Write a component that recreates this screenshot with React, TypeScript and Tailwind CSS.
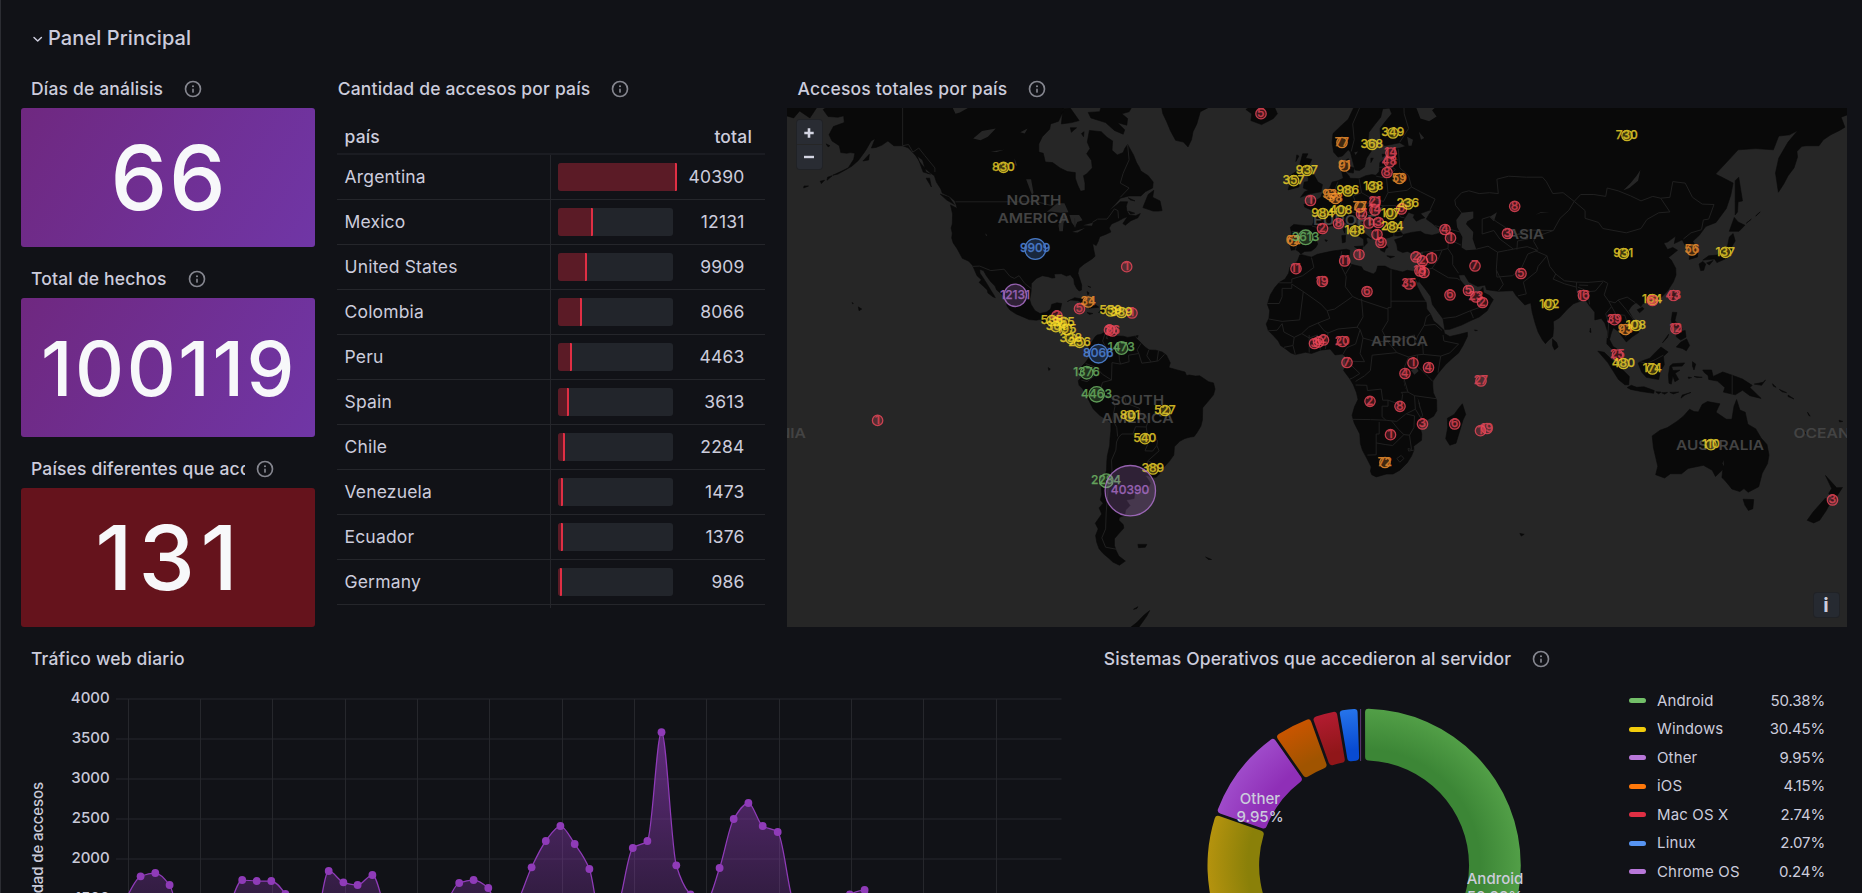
import React from "react";

/* ---------- map geometry: "lon,lat" rings in web mercator ---------- */

const project = (lon: number, lat: number): [number, number] => [
  1317.4 + 2.942 * lon,
  367.6 - 168.5 * Math.log(Math.tan(Math.PI / 4 + (lat * Math.PI) / 360)),
];

const toPath = (ring: string, close: boolean) =>
  "M" +
  ring
    .trim()
    .split(/\s+/)
    .map((p) => {
      const [lon, lat] = p.split(",").map(Number);
      const [x, y] = project(lon, lat);
      return x.toFixed(1) + " " + y.toFixed(1);
    })
    .join("L") +
  (close ? "Z" : "");

const LAND: string[] = [
  // Americas
  "-166,75 -166,68.3 -163.8,66.6 -168,65.6 -166.3,64.6 -163,64.5 -161,64.7 -160.8,63.7 -164.5,63.1 -166,61.8 -165,60.8 -162.5,60 -162,58.8 -160,58.7 -158.7,58.8 -157.2,58.7 -157.6,57.6 -159.5,56 -162,55.3 -164.7,54.6 -163,54.8 -160.5,55.6 -158.3,56.3 -156,57.4 -154.2,58.7 -153.3,59.4 -151.7,60.8 -150.3,61.2 -151.6,59.6 -150,59.7 -148,60.1 -146,60.8 -144,60 -141,60 -139,59.6 -136.6,58.3 -135,57 -133.5,56 -131.5,55 -130.2,54.5 -129.5,53.2 -128,51.8 -127.5,50.9 -125,50.2 -123.2,49.2 -122.4,47.5 -124.7,48.3 -124,46.2 -124.1,43.8 -124.5,42.8 -124.1,41.5 -124.3,40.3 -123.8,39 -122.5,37.5 -121.9,36.6 -120.7,34.8 -118.5,34 -117.2,32.8 -116.3,31 -115.7,29.8 -114.2,28.6 -115,27.8 -113.6,26.7 -112.2,25.5 -112,24.6 -110.3,23.4 -109.5,23.1 -110,24 -111,25.4 -112.2,27.2 -113.5,29 -114.7,30.5 -114.8,31.7 -113.5,31.3 -112.5,29.8 -111,28 -109.6,26.7 -109,25.5 -107,24 -105.8,22.4 -105.5,20.5 -104.5,19.2 -102.5,18 -100,17 -98,16.1 -95.5,15.9 -94,16.2 -92.3,14.6 -90,13.8 -87.8,13.2 -87.3,12.8 -85.8,11.1 -85.7,10 -84,9.4 -83.2,8.4 -81.5,8 -80.3,7.3 -80,8.4 -79,8.9 -78.3,8.2 -77.8,7.3 -77.4,5.6 -77.2,4 -78.8,1.8 -80,0.5 -80.9,-1 -80.8,-2.2 -80,-2.8 -80.3,-3.4 -81.3,-4.5 -81,-6 -79.8,-7.2 -78.5,-9.5 -77.2,-12 -76.2,-13.9 -74,-16 -71.5,-17.5 -70.2,-18.5 -70.2,-21 -70.5,-23.5 -70.6,-25.5 -71.4,-28.8 -71.6,-30.5 -71.7,-33 -72.6,-35.5 -73.5,-37.2 -73.3,-39.5 -73.8,-41 -72.8,-41.8 -74.2,-43 -73.3,-44.5 -74.6,-45.8 -75.5,-46.7 -74.5,-48 -75.4,-49.5 -75,-51 -74.2,-52.3 -72.8,-53.3 -71,-54.2 -69.5,-55 -67.3,-55.6 -65.3,-54.8 -67.5,-53.8 -68.5,-52.6 -69,-51.6 -69,-50.2 -67.7,-49.2 -65.8,-47.8 -66,-47 -67.5,-46 -67.3,-45.3 -65.5,-44.8 -65.2,-43.5 -63.7,-42.4 -65,-41 -62.3,-40.6 -62.1,-39 -60.5,-38.9 -57.7,-38.2 -56.8,-36.6 -57.3,-35.8 -58.5,-34.4 -57.8,-34.4 -56.2,-34.9 -54.8,-34.9 -53.5,-33.8 -52.1,-32 -50.2,-30.2 -48.8,-28.5 -48.6,-26 -46.8,-24.3 -45,-23.4 -43.2,-23 -41.9,-22.8 -40.9,-21.5 -39.6,-19.5 -39.1,-17.5 -39,-13.5 -37.5,-11.8 -35.3,-9.2 -34.8,-7.3 -35.3,-5.2 -37,-4.8 -38.6,-3.7 -40,-2.8 -41.5,-2.9 -43.5,-2.5 -44.5,-2.7 -45,-1.5 -48,-0.7 -50.5,0 -50,1.6 -51.3,4.2 -52.8,5.3 -55,5.9 -57.2,6 -58.6,7 -60,8.4 -61.5,9.8 -62,10.6 -64.5,10.2 -66,10.6 -68,10.7 -69.8,11.5 -70.2,12 -71.5,11 -71,9.3 -72,9.8 -71.7,11 -72.2,12 -73.5,11.3 -74.8,11 -75.5,10.5 -76.8,8.5 -77.5,8.6 -79,9.5 -80.5,9.1 -82,9 -83.5,10.7 -83.6,12.5 -83.2,14.8 -84.5,15.8 -86.5,15.8 -88.6,15.8 -88.2,17.5 -87.5,19 -86.9,21.3 -88.5,21.5 -90.3,21 -90.7,19.5 -92,18.6 -94.3,18.1 -96,19 -97.3,21 -97.8,22.5 -97.3,25 -97.2,27.5 -95.5,29 -93.5,29.8 -91.5,29.5 -90.2,29.1 -89.2,29.2 -89.5,30.3 -87,30.4 -85.3,29.7 -84,30.1 -82.8,28.8 -82.6,27.3 -81.8,26 -81,25.2 -80.2,25.5 -80.1,27 -80.7,28.6 -81.4,30.5 -81,32 -79.3,33.2 -77.8,34 -76.5,34.7 -75.6,35.4 -76,37 -76.4,38.8 -75.2,38.3 -74.5,39.4 -74,40.6 -72,41.2 -70.2,41.8 -70.8,42.8 -70,43.8 -67.5,44.6 -66,45.2 -64.5,45.6 -66.1,43.9 -65.3,43.5 -63.4,44.6 -61,45.3 -60.2,46.3 -61.8,45.8 -64,46 -64.8,47 -65,48 -64.5,49 -67,49 -69.5,47.6 -71,46.9 -69,48.3 -67,49.8 -64,50.3 -60,50.3 -58.5,51.2 -56,52 -55.8,53.2 -57.5,54.5 -60,55.4 -60.5,56.1 -61.5,57 -62.5,58.4 -64.5,60.2 -65.5,59.5 -66,58.8 -68,58.4 -69.8,59.2 -69.6,60.8 -71.5,61.4 -73.5,62.3 -77.5,62.5 -78.2,60.6 -77.3,59.5 -78.4,58.6 -76.8,57.4 -76.5,56 -78.5,54.8 -79.5,54.5 -79,53 -79,51.5 -80.5,51.3 -81.5,52.6 -82.3,54 -82.3,55.1 -85,55.3 -87.5,56 -90,57 -92.5,57.1 -93.2,58.7 -94.7,58.9 -94.7,60.3 -93.5,61.5 -91,62.7 -90.7,63.5 -88,63.9 -86.8,65 -86,66 -85,68 -85,75",
  "-73,75 -73,68 -73.5,66 -74,65.3 -77.9,65.2 -77,64.4 -72,63.7 -69,62.5 -66,61.9 -65.5,62.6 -68,63.7 -64.8,63.3 -64.5,64.3 -66.5,65 -64,65.3 -62,66.7 -62,75",
  "-86.5,65.7 -84,65.8 -81,64 -83.5,63.7 -87,63.5",
  "-84,62.9 -81.9,62.9 -83.6,62.2", "-80.2,62 -79.3,62.3 -79.5,61.5",
  "-59.3,47.7 -57.5,50.6 -55.6,51.5 -56,50 -53.5,49.2 -52.8,47 -54,46.9 -55.8,46.9",
  "-64.3,49.9 -62,49.2 -63.5,49.4", "-64.2,46.9 -62.1,46.4 -63.5,46.2",
  "-128.2,50.7 -125.2,50 -123.4,48.4 -126,49.4", "-133,54 -131.8,54 -131.2,52.2",
  "-136,58.2 -134.2,57.5 -133,55.2 -131.5,54.8 -134,55.2",
  "-154.5,57.3 -152.3,58.5 -152.5,57.5", "-171.5,63.7 -169,63.3 -171,63.3", "-167,60.3 -165.7,60 -166.3,59.8",
  "-166.5,54.2 -164.9,54.5 -166.7,53.6", "-169,53.4 -167.5,53.6 -168.6,52.9", "-174.5,52.4 -173,52.4 -174.6,52",
  "-54,75 -53.5,67 -52.5,65 -51.2,63.8 -50,62.5 -48.2,60.9 -45.5,60.6 -44,59.8 -42.8,61 -42.3,62.3 -41,63.5 -39.8,65.3 -36.5,66 -32,68 -30,75",
  "-24.3,65.6 -22.3,65 -22.6,64 -19,63.4 -15,64.3 -13.6,65 -15,66.3 -17,66.1 -20,65.8 -22,66.3",
  "-85,21.9 -82.5,23.1 -79.5,22.6 -75,20.6 -74.3,20.1 -77.6,19.8 -78.2,20.9 -81.5,22.2 -84,22.4",
  "-74.4,18.4 -73,19.9 -70,19.7 -68.4,18.6 -71,18.1", "-78.3,18.4 -76.3,18.1 -77.5,17.8", "-67.2,18.4 -65.7,18.3 -66.5,17.9",
  "-78.3,25 -77.6,24.6 -78,24", "-61.8,10.7 -60.9,10.8 -61.2,10.1", "-78,26.7 -77,26.3 -77.7,26.5",
  "-61,-51.4 -58,-51.4 -58.5,-52 -60.8,-52.1", "-38,-54 -36,-54.5 -37,-54.5",
  "-156,20.2 -154.9,19.5 -155.8,19", "-158.2,21.6 -157.7,21.3 -158,21.2", "-91.5,0 -90.8,-0.5 -91.3,-1",
  "-64,-68 -64,-66 -61.5,-65.2 -59,-64.1 -57,-63.4 -58,-64.2 -61,-66 -61.5,-68", "-62.5,-63.2 -61,-62.8 -61.5,-63.1",
  // Chukotka beyond the antimeridian
  "-182,75 -182,64.9 -178,64.4 -176,65.4 -172.5,64.4 -170,66 -175,67.2 -178,75",
  // Eurasia and Africa
  "15,75 14.5,67.5 12.5,66 10.5,64.2 8,63.2 5.3,62 5,60.5 5.5,58.9 7,58 8.5,58.2 10.5,59.3 11.2,58.9 12,57.3 12.8,55.6 14.3,55.5 16,56.2 16.7,57.8 18.5,59.2 18.8,60 17.2,60.8 17.5,62.2 19.5,63.4 21.5,64.5 22.2,65.7 24.5,65.8 25.3,65 22.8,63.7 21.3,62.8 21.5,61 22.8,60 25,60.2 28,60.5 30,59.9 28,59.6 24,59.3 23.5,58.6 24.4,58.2 24.2,57.2 22.6,57.6 21.2,57 21,55.3 19.9,54.6 18.5,54.7 16.5,54.5 14.2,53.9 11,54 10.8,54.4 9.6,55.2 10.5,56.6 10.5,57.7 8.2,57 8.2,55.5 8.8,54 7,53.5 5,53.2 4,51.8 2.5,51.1 1.6,50.8 1.2,50 -0.2,49.4 -1.5,49.6 -1.5,48.6 -4.6,48.5 -4.3,47.8 -2.2,47.2 -1.2,46 -1.3,44.3 -1.8,43.4 -4,43.4 -8,43.7 -9.2,43 -8.8,41.5 -9.4,38.7 -8.9,37 -7.4,37.2 -6.3,36.6 -5.6,36 -4.4,36.7 -2.1,36.8 -0.6,37.7 0.1,38.7 -0.3,39.5 0.8,41 3.2,42 3.1,43.1 4.8,43.4 6.5,43.1 8.7,44.4 10.2,43.9 11,42.4 12.5,41.5 14,40.8 15.7,40 15.8,38 17,39 16.6,40.3 17.2,40.4 18.4,40 16,41.5 16,41.9 14,42.5 13.5,43.6 12.3,44.6 12.3,45.4 13.7,45.6 13.6,45 15,44.4 16.5,43.4 18.5,42.4 19.4,41.6 19.5,40.2 21,38.8 21.5,37 22.8,36.5 23.2,37.5 24,37.8 22.8,39.2 23.3,40.2 24,40.3 26,40.9 27.3,40.8 28.8,41 29,41.3 28,42 27.8,43 28.6,43.8 29.6,45.2 31,46.6 33,46.1 32.6,45.4 33.6,44.5 35.4,45.1 36.5,45.3 35,46.3 38,47.1 39.2,47.2 38,46.2 37,45 39,44 41.5,42.5 41.5,41.5 39,41 36.5,41.3 35,42 32,41.7 29.2,41.2 29,40.5 26.2,39.8 27,38.5 27.3,37 29,36.4 30.6,36.7 32.3,36.1 34,36.3 36.1,36.8 35.8,35 35,33 34.3,31.3 32.5,31.1 30.5,31.4 29,30.9 25,31.7 23,32.6 20.5,32.6 20,31 19,30.3 15.7,31.4 15,32.4 11.5,33.1 10.2,34.2 10.8,35.5 11,37 9.8,37.3 5,36.8 0,35.9 -2,35.1 -5.3,35.8 -6,35.7 -6.8,34 -9.3,32.4 -9.8,30.5 -11,28.8 -13,27.8 -14.5,26.2 -16,24 -17,21 -16.2,19 -16.5,16.5 -17.4,14.7 -16.7,12.5 -15,10.8 -13.3,9 -12.5,7.5 -11,6.5 -9,5 -7.5,4.4 -4,5.2 -2,4.8 1,5.9 4.3,6.3 6,4.3 8.5,4.6 9.6,3.8 9.6,2 9.3,0 8.9,-1 11,-3.8 12.2,-5.8 13.3,-8.5 13.8,-10.8 12.6,-13.2 11.8,-16 12.5,-18.5 14.4,-22 14.6,-25 15.3,-27 17,-29.8 18.3,-32 18,-33.2 18.5,-34.2 20,-34.8 23.5,-34 25.7,-34 28,-32.9 30.5,-30.8 32,-28.8 32.8,-27 32.7,-25.8 35.4,-24 35.5,-22 34.9,-20 36.8,-17.8 39.5,-16.3 40.6,-14.5 40.5,-11 39.4,-8.5 39.2,-6 39.2,-4.6 41,-2 43.5,1 46,3.3 48,5 49.5,7.5 51,10.5 51,11.9 48,11.2 45,10.5 43.2,11.5 43,12.6 41,14.5 39.5,15.6 38.4,18 37.2,19.5 37,21.5 35.5,23.9 34,26.5 32.6,29.9 34.2,27.8 35,29.5 34.7,28 36.5,26 38.5,23.5 39.1,21 41,18.5 42.7,16.4 43.3,12.8 45,12.9 49,14.3 52.2,15.8 55,17 57.7,19 58.8,21 59.8,22.5 58.5,23.8 56.5,24.7 56.3,26.3 55,25 52,24.1 51.4,25.8 50.8,24.8 50.2,26.7 48.5,28.5 48,30 50,30.1 51.5,27.9 54.5,26.6 57,27 57.5,25.6 61.5,25.1 66.5,25.3 67.5,23.8 69,22.3 70.5,20.8 72.5,21.5 73,18.5 74,15 75,12 76.4,9.5 77.5,8.1 78.3,9 80,10.5 80.3,13.3 80.2,15.5 82.3,16.7 85,19.5 87,21.2 89,21.9 91,22.6 92.3,20.8 94.3,18.5 94.3,16 96.5,16.5 97.7,15 98.7,12 98.4,9 98.4,8 100.4,6 101.3,3 103.5,1.4 104.2,1.4 103.4,4 102,6.2 100.5,7.2 99.3,9.5 100,12 100.6,13.4 102.3,12.2 103.5,10.6 105,8.7 107,10.4 109.2,11.8 109,14 107,16.9 105.7,19 106.8,20.5 108.3,21.6 110,20.3 110.5,21.2 113.5,22.2 116.5,22.9 119,25.2 121,28 121.9,30 121.8,32 120.3,34.3 119.3,35 122.4,37 120.8,37.8 119,37.2 117.7,39 119,39.2 121.8,40.8 121.3,38.8 124,39.8 125.2,38 126.6,37.2 126.4,34.5 129.2,35.2 129.4,37 127.6,39.4 129.8,41 132,43.2 135.5,44.2 139,47.5 140.5,50.5 141.3,53 137.5,54.2 135.3,54.8 139,57 143,59.3 149,59.5 155,59.3 156.8,61.6 160.5,61.8 163.3,62.5 160,60.6 156.8,57.8 155.7,55 156.7,51.1 158.5,52.8 160,54.5 162,56 163.2,58 163,59 164.7,59.9 166.5,60 170.5,60 172,61 174.5,61.8 177.5,62.5 179.3,63 178,64.5 181,65 181,75",
  "-5.7,50 -3,50.7 1.3,51.2 1.7,52.7 0.2,53.2 -1.5,55 -3.2,56 -1.9,57.6 -4,57.8 -3.2,58.6 -5,58.6 -6,56.6 -4.8,54.8 -3,54.1 -3.2,53.3 -4.5,53.2 -4.8,52 -3,51.5 -4.3,51.2",
  "-10,51.6 -6.3,52.2 -6,53.5 -5.6,54.6 -7.3,55.3 -10,54.2 -9.2,53.1", "-7,58.4 -6.3,58.2 -7.3,57.2",
  "9.9,57.4 10.9,56.3 12.5,56 12.2,55 10.3,55.2", "12.5,38 15.5,38.2 15.1,36.7", "8.3,40.9 9.6,41 9.5,39.2 8.5,39", "8.7,42.5 9.4,43 9.3,41.5",
  "23.6,35.5 26.2,35.3 24.8,34.9", "32.4,34.9 34.5,35.6 33.2,34.6", "18.2,57.8 19,57.8 18.2,57", "22,58.5 23.2,58.5 22.2,58", "2.5,39.8 3.4,39.7 3,39.3",
  "49.3,-12.2 50.4,-15.7 49.5,-17.5 47.1,-24.9 45,-25.5 43.6,-23.5 44.3,-20 44.2,-17 46.5,-15.7 48,-13.7",
  "79.9,9.7 81.3,8.5 81.8,7 80.6,6 79.9,7.5", "53.4,12.7 54.4,12.5 53.6,12.4", "92.8,13.3 93,11.8 92.6,12",
  "95.3,5.6 97.5,5.2 100.5,2.3 103.5,-0.5 106,-3 105.8,-5.8 104.5,-5.8 102.3,-4 100.4,-1 98.7,1.7",
  "105.3,-6.8 106.7,-6 108.5,-6.7 111,-6.5 114.5,-7.8 114.3,-8.7 110,-8.1 106.5,-7.4", "115,-8.2 116.8,-8.3 116,-8.9", "117,-8.5 119,-8.4 118,-9", "119.8,-8.4 122.8,-8.3 121,-8.9", "124,-9.3 127,-8.4 125,-9.2 123.6,-10.3",
  "109,1.5 109.7,2 111.3,2.6 113,3.2 115.2,5.5 116.8,7 119.2,5.3 117.6,3.8 117.9,1 116.5,-1.5 116,-4 114.5,-3.8 111.8,-3.3 110.2,-1.5",
  "119.8,0.5 120.8,1.3 124.8,1.6 124,0.5 120.4,0.4 120.8,-1 123.2,-0.9 121.6,-1.9 122.8,-4 121.5,-4.8 120.8,-2.8 120.3,-5.6 119.5,-5.3 119.3,-2.5",
  "127.5,2 128.6,1.2 128,-0.8 127.5,0.5", "128,-3 130.8,-3.3 129,-3.4", "126,-3.2 127.2,-3.4 126.2,-3.7",
  "131,-0.8 134,-0.8 134.5,-3 137.8,-1.5 141,-2.6 144.5,-3.9 147.8,-6 147,-6.8 150.8,-10.4 147,-9.5 144.5,-7.7 142,-9.2 138,-8.3 138.5,-6.8 136,-4.6 133,-4 132.8,-2.7 131.5,-1.7",
  "148.5,-5.6 151.5,-5 152.3,-4.2 151,-6", "154.7,-5.5 155.9,-6.7 155,-6.3", "157,-7.4 159.5,-8.5 158,-8.2", "160,-9.3 162,-10.6 160,-9.8", "166.6,-15 167.5,-16.3 167,-16", "164,-20.2 167,-22.3 165.5,-21.6", "177.3,-17.6 178.6,-18 177.5,-18.2",
  "120.3,16 120.7,18.5 122.2,18.4 121.5,15.8 124,13 123.5,12.9 120.7,13.8", "122,11.8 125,12.5 125.3,10.3 123.5,9.3 122,10.4", "122,7 123.5,8.6 125.5,9.7 126.5,7.5 125.4,5.7 124,6.5", "117.3,8.4 119.4,11.3 119,10.2",
  "120.2,23.2 121.3,25.2 121.9,25 120.9,22", "108.7,19.3 110.5,20.1 111,19.6 109.5,18.3",
  "129.7,33.2 131,33.9 132,33.2 131.3,31.4 130.3,31.3", "132.3,33.5 134.5,34.2 133.2,32.9", "131,34.3 133,35.5 136,35.7 137.2,37.2 139.4,38.2 140,40.5 141.3,41.4 142,39.5 140.9,38 140.8,35.7 138.8,34.7 135.8,33.6 135,34.6",
  "140,42 141.7,45.4 143,44.3 145.3,43.5 143.3,42", "142,53.5 143.2,54.2 144.5,49.2 143,49 142.8,46.7 142,46 142,49",
  "145.8,44 147.5,45 146.5,44.4", "149,45.7 150.5,46.7 149.3,46",
  "113.8,-22.6 114.2,-26.2 115.7,-31.8 115,-34.2 118,-35.1 120,-33.9 123.8,-33.9 126,-32.4 131.2,-31.5 134.2,-32.9 135.3,-34.7 137.8,-32.7 137.5,-35 138.3,-35.6 139.8,-37 140.9,-38.1 143.6,-38.8 145,-38 146.4,-39 150,-37.5 151.2,-33.8 153,-31 153.5,-28.5 152.8,-25.3 150.8,-23.3 149,-20.4 146.3,-18.9 145.4,-15 143.6,-14.3 142.5,-10.8 141.6,-13 140.9,-17.3 139,-17.3 135.5,-15 136.8,-12.2 132.6,-11.5 130.8,-12.4 129.5,-14.9 128,-14.8 126.5,-14 124.4,-16.3 122.2,-18 119,-20 116.5,-20.8",
  "144.7,-40.8 148.3,-40.9 148,-43.2 146.5,-43.6 145.3,-42.3",
  "172.7,-34.4 175,-36.5 176.5,-37.8 178.5,-37.7 177,-39.5 175.2,-41.6 174.6,-41.2 175.1,-40 173.8,-39.3 174.8,-38", "172.7,-40.5 174.3,-41.8 172.8,-43.8 170.7,-46 168.7,-46.6 166.5,-46 168.5,-44",
  "68.8,-49 70.3,-49.2 69.3,-49.6", "55.3,-21 55.8,-21.2 55.4,-21.3",
];

const WATER: string[] = [
  "-92,46.7 -88.5,48.7 -86,48.7 -84.6,46.6 -87.3,46.5 -90.5,46.8",
  "-87.7,42 -86.5,42 -86.3,44 -85,45.8 -87.2,45.6 -88,43.5", "-84.3,46 -81,46 -79.8,44.7 -81.6,44.3 -82.4,43.1 -83.5,44.2",
  "-83.4,41.8 -79,42.8 -81.5,41.7", "-79.6,43.5 -76.3,44.1 -76.6,43.4",
  "-99,53.8 -97.3,53.8 -96.5,51 -97,50.5", "-117,61.2 -114,62.4 -109.3,62.8 -112,61.5 -114.5,60.9", "-124.5,66.3 -121,66.5 -118,66 -121.5,65.2 -123,65", "-111,59 -106.5,59.3 -109,58.9", "-103,57.8 -102,56.4 -102.7,56.5", "-101,62.2 -98.5,62.8 -99.5,62", "-112.9,41.5 -112.2,41 -112.6,40.8",
  "47.2,44.8 49,46.5 53,46.8 53,45.2 51,44.5 50.5,43.8 53,41.8 52.8,40 54,37.2 50.5,37 49,37.8 49.3,40.5 47.5,43",
  "58.5,45.5 61,46.6 60,44.5", "30.5,61.5 32.5,61 32,60 31,60", "34.5,62.3 36.3,61.3 35.2,61",
  "34,66.8 33,66.5 35,64.3 38,63.9 40.5,64.6 39,65.5 41,66.2 43,66.8",
  "104,51.5 106,52 109,53.5 109.8,55.6 108.5,54.5 106.5,53", "31.8,-1 33.5,0.4 34.4,-1.2 33,-2.4", "29.2,-3.5 29.5,-6 30.8,-8.5 29.9,-7", "34,-10 34.8,-12 34.9,-14", "74,46 76,46.7 79,46.6 76,46.5",
  "-86,12 -85,11.2 -85.5,11.2", "12.5,58.8 13.8,59 13,58.4", "138,-30 138.2,-31.8 137.7,-31",
];

const BORDERS: string[] = [
  "-141,75 -141,60 -139,60.2 -137.5,58.9 -135.5,59.6 -133.5,58.3 -130,56 -130,55.2",
  "-123,49 -95.2,49 -93,48.6 -90,48.1", "-82.5,45.2 -82.4,43", "-76.5,44.2 -74.7,45 -71.5,45 -70.2,46.2 -69,47.4 -67.8,47 -67.6,45.2", "-67,50 -64,52 -67,53 -66,55 -64,57.5 -64.5,60.2",
  "-117.1,32.5 -114.8,32.6 -111,31.3 -106.5,31.7 -104.5,29.6 -103,29 -101.4,29.8 -99.5,27.5 -97.2,25.9",
  "-92.2,14.5 -91.5,16 -90.5,16.2 -90.9,17.8 -89.2,17.8 -89.2,16 -88.5,15.8", "-89.3,14.4 -87.8,13.4", "-83.3,15 -86,13.8 -87.3,12.9", "-85.7,11.1 -83.7,10.9", "-77.4,8.6 -77.9,7.3",
  "-72,12 -73,9 -72,7 -67.5,6.2 -67.3,2.5 -66.9,1.2 -69.8,1.7 -70,-4.2 -73,-2.3 -75.2,0 -78.8,1.4", "-60,8.2 -61.3,6 -60.7,4.8 -64.2,4.2 -64,2 -66.9,1.2", "-57.3,6 -58,4 -56.5,1.9 -54,2.3 -52,4.5", "-54,5.8 -54.5,2.3", "-60.7,4.8 -59.7,1.5 -56.5,1.9",
  "-75.2,0 -76,-3 -78.3,-4.8 -80.3,-4.2", "-70,-4.2 -73,-5 -73.8,-7.5 -72.8,-9.5 -70.5,-9.6 -69.5,-11 -65.5,-9.8 -65,-12 -60.5,-13.7 -60,-16.2 -58.2,-16.3 -57.6,-18.2 -58.2,-19.8 -61.8,-19.7 -62.7,-22 -66.5,-22 -67.5,-23 -68.3,-24.5 -68.5,-27 -70,-30 -69.8,-33.2 -71,-36 -71.3,-40 -71.8,-44 -72,-48 -73.3,-50 -72,-52 -68.4,-52.4", "-69.5,-11 -68.8,-13 -69.3,-15.5 -69.5,-17.5 -68.2,-20 -67.9,-22.8", "-58.2,-19.8 -57.8,-22.1 -55.7,-22.4 -54.3,-24.2 -54.6,-25.6 -56,-27.3 -58.6,-27.2 -57.7,-25.3 -62.7,-22.2", "-54.6,-25.6 -53.8,-27.2 -57.6,-30.2 -58.2,-33.5", "-57.6,-30.2 -55,-31.3 -53.5,-33.6",
  // Africa
  "-2,35 -1.2,32.2 -5,29.8 -8.7,28.8 -8.7,27.7 -13,27.7", "-8.7,27.3 -8.7,26 -12,26 -12,23.4 -13,21.3 -17,21.3", "-8.7,27.3 -4.8,25 -6,16 -12,15.5 -16.5,16.3", "-4.8,25 1.2,21.1 3.3,19 5.8,19.5 12,23.5 14,22.6 24,19.5 24,20 25,20 25,31.6", "12,23.5 9.5,26.5 9.8,29.5 9.5,30.2 7.5,33.5 8.3,36.8", "9.5,30.2 11.5,33",
  "25,22 37,22", "3.3,19 4.2,16.5 0.2,15 -3,13.6 -5.3,11.5 -7.9,10.2 -11.4,12 -12,14.8", "0.2,15 2.3,12.4 3.6,11.7 2.7,6.3", "3.6,11.7 7,13 13.5,13.6 15.5,17 15,22.8", "13.5,13.6 14.5,12.8 13,8 10,6.8 8.7,4.6", "14.5,12.8 15.5,10 14.5,4.8 16,2 9.8,2.2", "15.5,10 19,9 24,8.7 27,5.1 18.6,4.2 18,-1 16,-2.8 13,-4.7", "24,8.7 22,12.5 24,15.7 24,19.5", "27,5.1 31,3.6 34,4.3 36,4.5 35.8,8 33,8 34.1,10.6 36.3,14.2 37,17 38.5,18", "36.3,14.2 40,14.5 42.4,12.5", "33,8 33,11 29,9.8 24,8.7", "36,4.5 41.9,3.9 45,5 48,8 43,9 42.7,11", "41.9,3.9 41,-1.7", "34,4.3 34,0.5 37.7,-3.1 39.2,-4.7", "31,3.6 29.7,0.5 29.5,-4 30.8,-8.3 33,-9.5 40.4,-10.5", "13,-5.9 16.8,-6 17,-7.8 21.7,-7.3 22.2,-11 24,-11 28.5,-12.5 29,-9 28.5,-8.4 30.8,-8.3", "24,-11 24,-13 22,-13 22,-16.5 23.3,-17.6 18,-17.4 11.8,-17.3", "33,-9.5 33.3,-14 30,-15.6 27,-18 25,-17.8 23.3,-17.6", "33.3,-14 35.2,-17 35.8,-16 34.5,-12", "21,-18.2 21,-22 20,-22 20,-28.4 17,-28.5", "20,-24.8 23,-25.3 25.6,-25.6 29.4,-22.2 31.3,-22.4 32.8,-20 33,-16.2 30.4,-15.6", "25.2,-17.8 27.5,-20.5 29.4,-22.2", "31.3,-22.4 32,-26.8 30.8,-26.5 31,-27.3 32.8,-27", "27,-29.5 28.5,-28.6 29.4,-29.5 28,-30.6 27,-29.5",
  "-12,14.8 -13.7,12.6 -16.7,12.4", "-7.9,10.2 -8.3,7.5 -7.5,4.4", "-8.3,7.5 -11.4,6.9", "-2.8,11 -2.8,5.1", "-5.3,11.5 -2.8,10 0,11 1,6", "11.3,2.2 11.3,1 14.4,-2 12,-3.5 11,-3.9",
  // Europe
  "-8.7,42 -6.5,41.8 -7,39 -7.4,37.2", "-1.8,43.3 3,42.4", "7.5,43.8 7,46 6,46.3 7.6,47.6 8.1,49 6.2,49.5 2.6,51", "7.6,47.6 13,47.6 13,48.8 12.2,50.3 15,51 14.2,53.8", "6.2,49.5 6,51.8 7,53.3", "7,46 10.5,46.8 13.5,46.5 13.7,45.6", "15,51 18.8,49.6 22.5,49.1 24,51 23.5,54 20,54.4", "13,48.8 17,48.7 18.8,49.6", "17,48.7 16,47 13.5,46.5", "16,47 18.8,46 22.5,48.1 17,48.7", "18.8,46 20.3,46.1 22.7,44.2 28.6,43.8", "20.3,46.1 22.5,48.1 26.5,48.2 28.2,45.5 29.6,45.3", "22.7,44.2 22.4,42.3 26.3,41.8 28,42", "22.4,42.3 21,40.9 19.8,39.8", "16.5,46.4 19,45 19,43.5 20.5,42", "24,51 30.5,51.5 32,52.2 31,54.5 28,56 27.5,59.4", "21,56.1 25,56.3 26.5,55.7 23.5,54", "24.3,57.9 27.4,57.5", "32,52.2 35,51.2 40,49.6 38.3,47.2", "28,60.6 31,62.8 29.5,65 29,70", "11.5,59 12.5,61 12,63.5 14.5,66 16,68.5", "23.7,66 24,68", "26,41.6 26,40.8",
  // Middle East and Asia
  "41.5,41.5 43.5,41.1 44.5,39.8 44.4,37.5 42.4,37.1 36,36.5", "40,43.4 45,42.5 48.5,41.8", "43.5,41.1 46.5,41.3", "46,39.5 48.8,38.4", "44.4,37.5 46,35.5 46,33 48,30.5", "42.4,37.1 41,34.4 36,32.4", "41,34.4 39,32 37,31.5 38,30 36,29.2 35,29.5", "39,32 44.5,29.2 47.5,29 48.4,28.5", "42.8,16.5 47,17 52,19 52.8,17.2 53,16.6", "52,19 55,20 55.6,22.5 52.5,22.9 51.5,24.3",
  "54,37.3 58,38.1 61.2,36.5 60.8,31.5 63.2,27.2 61.6,25.2", "60.8,31.5 61,29.4 66.3,29.8 69.3,31.9 71.5,36 74.8,37", "61.2,36.5 64.5,37 66.5,37.3 71.3,38 74.8,37", "74,36.9 78,35.5 75,32.5 74.5,31 70,27.9 71,24.3 68.2,23.7", "78,35.5 79,32.5 81,30.3 84,28.3 88,27.9 92,27.8 97.3,28.2 98.7,27.5 97.5,24 99,22 101.2,21.5 102.2,22.4 105.3,23.3 108,21.6", "81,30.3 80.1,28.8 84,27.4 88,26.4 88.1,27.9", "88,26.4 89,22", "88.5,26.4 92.3,25 92.2,23 92.5,21", "89,27 92,26.9", "92.3,25 94.5,25.2 97,27.9",
  "99,22 100,20.3 98,18 99,15 98.6,10", "100,20.3 101.5,17.8 104.5,17.5 105.5,14.4 102.5,13.5 102.8,11.7", "102.2,22.4 104.8,19.5 107.5,16 107.3,14.2 105.8,11.5 104.6,10.5", "101,6.3 102,5.8", "109.7,2 112,1.4 115,2.8 117.6,4.2", "141,-2.6 141,-9.2",
  "49,46.5 47,48.2 46.7,49.4 49,51 51.5,51.4 55,50.8 58.5,51 61.5,50.8 61,53.8 65,54.4 71,54.2 76.5,54.2 77.8,53.3 80,50.8 83.5,51 87.3,49.1 89.5,50.6 94,50.6 98,50.2 98.5,52 102.2,51.4 106.5,50.3 110,49.2 114,50.2 116.7,49.8 119.8,50 120.8,53.3 125,53 127.5,50 130.8,48.5 134.8,48.4 133,45 131.2,44.8 130.6,42.5",
  "87.3,49.1 91,47 91,45.2 95.5,44.2 97,42.7 105,41.6 110,42.7 112,44.9 116,46.5 119.8,46.7 116.7,49.8", "87.3,49.1 85.5,47.1 82.5,45.2 80.2,42.2 74,40.5 73.5,39.4 75,37.3", "80.2,42.2 71,42.3 68,41.2 66,42 61,44.3 58.6,45.6 56,45 56,41.3 60,42.2 62,40 66.5,37.4", "68,41.2 71,41.2 71.5,40 68,39.5 67.8,37.2", "124.4,40 127,41.6 130.6,42.4", "126.7,37.8 128.3,38.5",
];

const landPath = LAND.map((r) => toPath(r, true)).join("");
const waterPath = WATER.map((r) => toPath(r, true)).join("");
const borderPath = BORDERS.map((r) => toPath(r, false)).join("");

/* x, baseline, text, width */
const MAP_LABELS: [number, number, string, number][] = [
  [1006.5, 204.9, "NORTH", 55],
  [997.5, 222.6, "AMERICA", 72],
  [1111, 405, "SOUTH", 53],
  [1101.5, 422.7, "AMERICA", 72],
  [1371, 345.7, "AFRICA", 57],
  [1508, 238.7, "ASIA", 36],
  [1313, 224.7, "EUROPE", 64],
  [1676, 450, "AUSTRALIA", 88],
  [1793.5, 437.7, "OCEANIA", 72],
  [734, 437.7, "OCEANIA", 72],
];

const R = "#F2495C";
const O = "#FF9830";
const Y = "#FADE2A";
const G = "#73BF69";
const B = "#5794F2";
const P = "#B877D9";

/* x, y, value, colour, radius */
const MARKERS: [number, number, string, string, number?][] = [
  [877.6, 420.4, "1", R],
  [1126.7, 266.7, "1", R],
  [1079.5, 308.7, "5", R],
  [1132, 313, "1", R],
  [1109.5, 330, "8", R],
  [1112.5, 331, "26", R],
  [1057, 316, "2", R],
  [1261, 113.7, "5", R],
  [1391, 153, "14", R],
  [1389.5, 162, "48", R],
  [1387, 172.5, "8", R],
  [1310.5, 200.5, "1", R],
  [1375, 202, "21", R],
  [1375, 210, "14", R],
  [1361.5, 214, "17", R],
  [1401.5, 209, "5", R],
  [1338.5, 223.5, "8", R],
  [1322.5, 228.5, "2", R],
  [1369, 223, "1", R],
  [1378.5, 222.5, "3", R],
  [1377, 234.5, "1", R],
  [1381, 242.5, "9", R],
  [1359, 254.5, "1", R],
  [1344.7, 261, "11", R],
  [1296, 268.7, "11", R],
  [1322.3, 281.5, "19", R],
  [1367, 291.5, "6", R],
  [1409, 284, "35", R],
  [1445, 229.5, "4", R],
  [1450.5, 238, "1", R],
  [1416, 257, "2", R],
  [1422.5, 261, "2", R],
  [1431.5, 258, "1", R],
  [1420, 271, "18", R],
  [1424, 272.5, "1", R],
  [1475, 266, "7", R],
  [1521, 273.5, "5", R],
  [1450, 295, "6", R],
  [1468.5, 290.5, "5", R],
  [1476, 297, "23", R],
  [1482.5, 302.5, "2", R],
  [1514.7, 206.3, "8", R],
  [1507.5, 233.5, "3", R],
  [1314.5, 343.5, "3", R],
  [1318.5, 342, "6", R],
  [1323.5, 340, "2", R],
  [1342.5, 341.5, "20", R],
  [1347, 362.5, "7", R],
  [1413, 363, "1", R],
  [1428.5, 367.5, "4", R],
  [1405, 373.5, "4", R],
  [1370, 401.3, "2", R],
  [1400, 406.3, "8", R],
  [1422.5, 424, "3", R],
  [1454.7, 424, "6", R],
  [1390.5, 434.7, "1", R],
  [1481, 381, "27", R],
  [1480.5, 430.7, "1", R],
  [1487, 428.5, "19", R],
  [1583.5, 295.5, "16", R],
  [1673.5, 295.5, "43", R],
  [1614.5, 319.7, "39", R],
  [1676, 328.7, "12", R],
  [1617.5, 355, "25", R],
  [1832.5, 500, "3", R],
  [1088.3, 302, "34", O],
  [1342, 142.5, "77", O],
  [1344.5, 166, "91", O],
  [1399.5, 178.5, "59", O],
  [1330, 194.5, "93", O],
  [1335.5, 198.5, "58", O],
  [1360, 207, "77", O],
  [1293.5, 240.7, "62", O],
  [1385, 462.5, "72", O],
  [1692, 250, "56", O],
  [1625.5, 329.5, "93", O],
  [1003.5, 167.3, "830", Y],
  [1051.9, 320.6, "585", Y],
  [1055.9, 326.6, "361", Y],
  [1063.7, 322.4, "365", Y],
  [1066.7, 329.4, "195", Y],
  [1071, 338.5, "338", Y],
  [1079.7, 342.4, "256", Y],
  [1110.7, 311, "559", Y],
  [1121.5, 312.5, "389", Y],
  [1130, 416, "801", Y],
  [1165, 410.5, "527", Y],
  [1145, 438.7, "540", Y],
  [1153, 469, "389", Y],
  [1393, 133, "349", Y],
  [1372, 144.5, "368", Y],
  [1307, 170.5, "937", Y],
  [1293.7, 180.7, "357", Y],
  [1348, 191, "986", Y],
  [1373.5, 187, "138", Y],
  [1323, 213.5, "984", Y],
  [1341, 211, "408", Y],
  [1391, 214, "107", Y],
  [1408, 204, "236", Y],
  [1355, 231, "148", Y],
  [1392.5, 227, "284", Y],
  [1549.5, 304.7, "102", Y],
  [1627, 135.5, "730", Y],
  [1623.5, 253.5, "931", Y],
  [1725.5, 252.3, "137", Y],
  [1652.5, 299.5, "164", Y],
  [1652.5, 300.5, "5", R],
  [1636, 325.5, "108", Y],
  [1623.5, 363.5, "480", Y],
  [1652.5, 369, "174", Y],
  [1711, 444.7, "110", Y],
  [1305.7, 237.3, "3613", G, 7.3],
  [1121.5, 348, "1473", G, 6.3],
  [1086.7, 372.7, "1376", G, 6.3],
  [1096.7, 394.3, "4463", G, 7.7],
  [1106.3, 480.7, "2284", G, 6.8],
  [1098.5, 353.7, "8066", B, 9.3],
  [1035.3, 249, "9909", B, 10.4],
  [1015.3, 295.3, "12131", P, 11.2],
  [1130.3, 490.7, "40390", P, 25.2],
];

function WorldMap() {
  return (
    <svg viewBox="787 108 1060 518.5" width="1060" height="518.5" className="block bg-[#262626]">
      <path d={landPath} fill="#090909" stroke="#090909" strokeWidth="0.6" strokeLinejoin="round" />
      <path d={waterPath} fill="#262626" />
      <path d={borderPath} fill="none" stroke="#202020" strokeWidth="1" strokeLinejoin="round" />
      {MAP_LABELS.map(([x, y, t, w], i) => (
        <text key={i} x={x} y={y} textLength={w} lengthAdjust="spacingAndGlyphs" fill="#434343" className="font-['Inter'] text-[13.5px] font-semibold">
          {t}
        </text>
      ))}
      {MARKERS.map(([x, y, t, c, r = 5.2], i) => (
        <g key={i} opacity="0.8">
          <circle cx={x} cy={y} r={r} fill={c} fillOpacity="0.28" stroke={c} strokeWidth="1.3" />
          <text x={x - 0.2} y={y + 3.2} textAnchor="middle" fill={c} stroke={c} strokeWidth="0.25" className="font-['Inter'] text-[12px] font-medium">
            {t}
          </text>
        </g>
      ))}
    </svg>
  );
}

/* ---------- shared pieces ---------- */

function InfoIcon() {
  return (
    <svg width="20" height="20" viewBox="0 0 24 24" fill="#85868f" className="shrink-0">
      <path d="M12,2A10,10,0,1,0,22,12,10,10,0,0,0,12,2Zm0,18a8,8,0,1,1,8-8A8,8,0,0,1,12,20Zm0-8.5a1,1,0,0,0-1,1v3a1,1,0,0,0,2,0v-3A1,1,0,0,0,12,11.5Zm0-4a1.25,1.25,0,1,0,1.25,1.25A1.25,1.25,0,0,0,12,7.5Z" />
    </svg>
  );
}

function PanelTitle({ children, info, clip }: { children: string; info?: boolean; clip?: boolean }) {
  return (
    <div className="flex h-10 items-center pt-[2px] text-[17.5px] font-medium tracking-[0.01em]">
      <h2 className={clip ? "w-[214px] overflow-hidden whitespace-nowrap" : "whitespace-nowrap"}>{children}</h2>
      {info && (
        <span className={clip ? "ml-[10px]" : "ml-5"}>
          <InfoIcon />
        </span>
      )}
    </div>
  );
}

function Stat({ title, value, clip, tone, size }: { title: string; value: string; clip?: boolean; tone: string; size: string }) {
  return (
    <section className="h-[190px]">
      <div className="pl-[10px]">
        <PanelTitle info clip={clip}>
          {title}
        </PanelTitle>
      </div>
      <div className={`flex h-[138.5px] items-center justify-center rounded-[3px] font-medium leading-none text-[#f7f8fa] ${tone} ${size}`}>
        <span>{value}</span>
      </div>
    </section>
  );
}

/* ---------- table ---------- */

const ROWS: [string, number][] = [
  ["Argentina", 40390],
  ["Mexico", 12131],
  ["United States", 9909],
  ["Colombia", 8066],
  ["Peru", 4463],
  ["Spain", 3613],
  ["Chile", 2284],
  ["Venezuela", 1473],
  ["Ecuador", 1376],
  ["Germany", 986],
];

function CountryTable() {
  return (
    <div className="w-[428px] pt-[11px] text-[17.5px] tracking-[0.01em]">
      <div className="flex h-[36px] items-center justify-between border-b-2 border-[#1b1c22] pt-[2px] pr-[13px] pl-[7.5px] font-medium">
        <span>país</span>
        <span>total</span>
      </div>
      {ROWS.map(([name, n]) => {
        const full = n === 40390;
        return (
          <div key={name} className="flex h-[45px]">
            <div className="flex w-[213px] items-center border-b border-[#25262b] pl-[7.5px]">{name}</div>
            <div className="flex flex-1 items-center border-b border-l border-[#25262b] pl-[7px]">
              <div className="flex h-7 w-[115px] shrink-0 rounded-[3px] bg-[#22252b]">
                <div
                  className="shrink-0 rounded-l-[3px] rounded-r-[1px] border-r-2 border-[#e02f44] bg-[#5b1b26]"
                  style={{ width: full ? 119 : 0.9 + (n / 40390) * 115 }}
                />
              </div>
              <span className="w-[71.5px] text-right">{n}</span>
            </div>
          </div>
        );
      })}
      <div className="ml-[213px] h-[3px] w-px bg-[#25262b]" />
    </div>
  );
}

/* ---------- daily traffic ---------- */

const SERIES: [number, number][] = [
  [111, 940], [126.5, 898], [140.6, 876.3], [155.3, 873], [169.6, 885], [184, 935], [198.7, 950], [213.2, 945], [227.6, 911],
  [242.2, 880], [256.7, 881], [271.3, 881], [285.4, 894], [300, 930], [314.5, 925], [328.7, 871], [343.4, 882.3], [357.6, 885], [372.4, 875],
  [386.7, 915], [401, 950], [415.7, 960], [430, 950], [444.6, 908], [459.2, 883], [473.6, 880], [488.3, 888], [502.7, 925], [517, 903],
  [531.6, 867.3], [545.8, 841], [560.4, 826], [574.7, 844], [589.4, 869], [603.7, 935], [618.2, 906], [632.8, 848], [647.4, 841],
  [661.5, 732.2], [676.3, 865.3], [690.6, 894.5], [705.2, 903], [719.6, 868], [733.7, 819], [748.4, 803], [762.7, 826], [777.7, 832], [792, 898],
  [806.5, 940], [821, 935], [835.5, 915], [849.8, 894.5], [864.6, 890], [879, 925],
];

/* monotone cubic interpolation through the daily samples */
function smooth(pts: [number, number][]) {
  const n = pts.length;
  const s: number[] = [];
  for (let i = 0; i < n - 1; i++) s.push((pts[i + 1][1] - pts[i][1]) / (pts[i + 1][0] - pts[i][0]));
  const m = pts.map((_, i) => {
    if (i === 0) return s[0];
    if (i === n - 1) return s[n - 2];
    return s[i - 1] * s[i] <= 0 ? 0 : (2 * s[i - 1] * s[i]) / (s[i - 1] + s[i]);
  });
  let d = `M${pts[0][0]} ${pts[0][1]}`;
  for (let i = 0; i < n - 1; i++) {
    const h = (pts[i + 1][0] - pts[i][0]) / 3;
    d += `C${pts[i][0] + h} ${pts[i][1] + h * m[i]} ${pts[i + 1][0] - h} ${pts[i + 1][1] - h * m[i + 1]} ${pts[i + 1][0]} ${pts[i + 1][1]}`;
  }
  return d;
}

const linePath = smooth(SERIES);
const V_GRID = [128.5, 200.5, 272.5, 345.5, 417.5, 489.5, 562.5, 634.5, 706.5, 779.5, 851.5, 923.5, 996.5];
const TICKS = [4000, 3500, 3000, 2500, 2000, 1500];

function TrafficChart() {
  return (
    <svg viewBox="21 680 1060 213" width="1060" height="213" className="block">
      <defs>
        <linearGradient id="area" gradientUnits="userSpaceOnUse" x1="0" y1="730" x2="0" y2="1020">
          <stop offset="0" stopColor="#8f3bb8" stopOpacity="0.62" />
          <stop offset="1" stopColor="#8f3bb8" stopOpacity="0" />
        </linearGradient>
      </defs>
      {TICKS.map((t, i) => (
        <g key={t}>
          <rect x="116" y={698 + i * 40} width="945.5" height="2" fill="#1b1c22" />
          <text x="109.7" y={703.4 + i * 40} textAnchor="end" fill="#c8c9d8" className="font-['Inter'] text-[15px] font-medium">
            {t}
          </text>
        </g>
      ))}
      {V_GRID.map((x) => (
        <path key={x} d={`M${x} 699V893`} stroke="#26272c" />
      ))}
      <text transform="translate(43 930) rotate(-90)" textLength="148" fill="#c8c9d8" className="font-['Inter'] text-[15px] font-medium">
        Cantidad de accesos
      </text>
      <path d={linePath + "V960H111Z"} fill="url(#area)" />
      <path d={linePath} fill="none" stroke="#8f3bb8" strokeWidth="1.25" />
      {SERIES.map(([x, y]) => (
        <circle key={x} cx={x} cy={y} r="3.9" fill="#8f3bb8" />
      ))}
    </svg>
  );
}

/* ---------- donut ---------- */

const OS: { name: string; pct: string; v: number; swatch: string; from: string; to: string }[] = [
  { name: "Android", pct: "50.38%", v: 50.38, swatch: "#73BF69", from: "#3c8636", to: "#529f47" },
  { name: "Windows", pct: "30.45%", v: 30.45, swatch: "#F2CC0C", from: "#8a8009", to: "#b5930e" },
  { name: "Other", pct: "9.95%", v: 9.95, swatch: "#B877D9", from: "#8f2fb7", to: "#9f4bca" },
  { name: "iOS", pct: "4.15%", v: 4.15, swatch: "#FF780A", from: "#a05400", to: "#c95500" },
  { name: "Mac OS X", pct: "2.74%", v: 2.74, swatch: "#E02F44", from: "#901619", to: "#b31c31" },
  { name: "Linux", pct: "2.07%", v: 2.07, swatch: "#5794F2", from: "#084bd2", to: "#2674ea" },
  { name: "Chrome OS", pct: "0.24%", v: 0.24, swatch: "#B877D9", from: "#54307a", to: "#7d4f98" },
];

const CX = 1364.1;
const CY = 865.4;

function sector(a0: number, a1: number) {
  const ri = 105;
  const ro = 156.6;
  const gap = 1;
  const c = Math.min(3.5, ((a1 - a0) * ri) / 4);
  const pt = (r: number, a: number) => `${(CX + r * Math.sin(a)).toFixed(2)} ${(CY - r * Math.cos(a)).toFixed(2)}`;
  const s = (r: number) => a0 + gap / r;
  const e = (r: number) => a1 - gap / r;
  const big = (r: number) => (e(r) - s(r) - (2 * c) / r > Math.PI ? 1 : 0);
  return (
    `M${pt(ri + c, s(ri))}L${pt(ro - c, s(ro))}Q${pt(ro, s(ro))} ${pt(ro, s(ro) + c / ro)}` +
    `A${ro} ${ro} 0 ${big(ro)} 1 ${pt(ro, e(ro) - c / ro)}Q${pt(ro, e(ro))} ${pt(ro - c, e(ro))}` +
    `L${pt(ri + c, e(ri))}Q${pt(ri, e(ri))} ${pt(ri, e(ri) - c / ri)}` +
    `A${ri} ${ri} 0 ${big(ri)} 0 ${pt(ri, s(ri) + c / ri)}Q${pt(ri, s(ri))} ${pt(ri + c, s(ri))}Z`
  );
}

function Donut() {
  const pad = 0.005;
  const total = Math.PI * 2 - pad * 9;
  let a = 0;
  const slices = OS.map((o) => {
    const a0 = a;
    const a1 = a0 + (o.v / 100) * total;
    a = a1 + pad;
    return { ...o, d: o.v > 1 ? sector(a0, a1) : "" };
  });
  return (
    <svg viewBox="1103 680 490 213" width="490" height="213" className="block">
      <defs>
        {slices.map((s, i) => (
          <radialGradient key={i} id={`os${i}`} gradientUnits="userSpaceOnUse" cx={CX} cy={CY} r="157">
            <stop offset="0.74" stopColor={s.from} />
            <stop offset="1" stopColor={s.to} />
          </radialGradient>
        ))}
      </defs>
      {slices.map((s, i) => (
        <path key={i} d={s.d} fill={`url(#os${i})`} />
      ))}
      <path d="M1360.6 709V761" stroke="#5d3a74" strokeWidth="1" />
      <g textAnchor="middle" fill="#ccccdc" className="font-['Inter'] text-[15px] font-medium">
        <text x="1260" y="804">Other</text>
        <text x="1260" y="822">9.95%</text>
        <text x="1495" y="884">Android</text>
        <text x="1495" y="902">50.38%</text>
      </g>
    </svg>
  );
}

function Legend() {
  return (
    <ul className="w-[196px] pt-[6.5px] text-[15px] tracking-[0.01em]">
      {OS.map((o) => (
        <li key={o.name} className="flex h-[28.5px] items-center">
          <span className="h-[5px] w-[17px] rounded-full" style={{ backgroundColor: o.swatch }} />
          <span className="ml-[11px] flex-1">{o.name}</span>
          <span className="tracking-[-0.01em]">{o.pct}</span>
        </li>
      ))}
    </ul>
  );
}

/* ---------- page ---------- */

export default function App() {
  return (
    <main className="flex h-[893px] w-[1862px] flex-col overflow-hidden border-l border-[#2c2d33] bg-[#111217] pl-5 font-['Inter',sans-serif] text-[#ccccdc]">
      <header className="flex h-[68px] shrink-0 items-center pt-[8px] pl-[10px]">
        <svg width="13" height="14" viewBox="0 0 13 14" className="mt-[2px]">
          <path d="M3 5.5L6.7 9L10.4 5.5" fill="none" stroke="#ccccdc" strokeWidth="1.5" strokeLinecap="round" strokeLinejoin="round" />
        </svg>
        <h1 className="ml-[4px] text-[20px] font-medium tracking-[0.005em]">Panel Principal</h1>
      </header>

      <div className="flex h-[570px] shrink-0">
        <div className="w-[294px]">
          <Stat title="Días de análisis" value="66" tone="bg-[linear-gradient(120deg,#6f2880_0%,#7036a6_100%)]" size="text-[90px] tracking-[0.02em] pl-[2px] pt-px" />
          <Stat title="Total de hechos" value="100119" tone="bg-[linear-gradient(120deg,#6f2880_0%,#7036a6_100%)]" size="text-[76px] tracking-[0.034em] pl-[2px] pt-px" />
          <Stat title="Países diferentes que accedieron" value="131" clip tone="bg-[#65131c]" size="text-[90px] tracking-[0.064em] pl-[3px] pt-px" />
        </div>

        <section className="ml-[22px] w-[450px]">
          <div className="pl-[0.7px]">
            <PanelTitle info>Cantidad de accesos por país</PanelTitle>
          </div>
          <CountryTable />
        </section>

        <section className="w-[1060px]">
          <div className="pl-[10.5px]">
            <PanelTitle info>Accesos totales por país</PanelTitle>
          </div>
          <div className="relative">
            <WorldMap />
            <div className="absolute top-[11.5px] left-[10px] flex w-[24.5px] flex-col gap-px rounded-[3px] text-[#d4d5e2] ring-1 ring-[#202226]">
              <button className="flex h-6 items-center justify-center rounded-t-[3px] bg-[#292c33] pt-[2px]">
                <svg width="10" height="10" viewBox="0 0 10 10">
                  <path d="M5 0.3V9.7M0.3 5H9.7" stroke="currentColor" strokeWidth="2.6" />
                </svg>
              </button>
              <button className="flex h-6 items-center justify-center rounded-b-[3px] bg-[#292c33]">
                <svg width="10" height="10" viewBox="0 0 10 10">
                  <path d="M0 5H10" stroke="currentColor" strokeWidth="2.4" />
                </svg>
              </button>
            </div>
            <button className="absolute right-[8.5px] bottom-[9.5px] flex h-6 w-[25px] items-center justify-center rounded-[3px] bg-[#262a31] text-[20px] leading-none font-bold ring-1 ring-[#202226]">
              i
            </button>
          </div>
        </section>
      </div>

      <div className="flex shrink-0">
        <section className="w-[1082px]">
          <div className="pl-[10px]">
            <PanelTitle>Tráfico web diario</PanelTitle>
          </div>
          <div className="pt-[2px]">
            <TrafficChart />
          </div>
        </section>
        <section>
          <div className="pl-[0.8px]">
            <PanelTitle info>Sistemas Operativos que accedieron al servidor</PanelTitle>
          </div>
          <div className="flex pt-[2px]">
            <Donut />
            <div className="ml-[36px]">
              <Legend />
            </div>
          </div>
        </section>
      </div>
    </main>
  );
}
